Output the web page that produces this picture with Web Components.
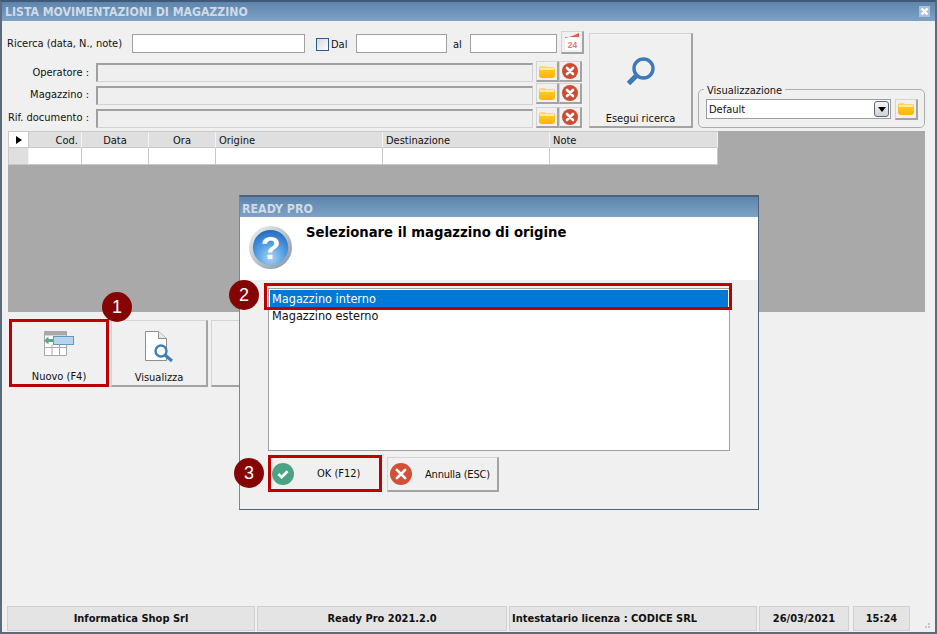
<!DOCTYPE html>
<html lang="it">
<head>
<meta charset="utf-8">
<title>Lista movimentazioni di magazzino</title>
<style>
    html, body { margin: 0; height: 100%; overflow: hidden; }
    body { font: 11px "DejaVu Sans Condensed", "Liberation Sans", sans-serif; color: #111; }
</style>
</head>
<body>
<app-window heading="LISTA MOVIMENTAZIONI DI MAGAZZINO">
    <search-form></search-form>
    <data-grid></data-grid>
    <tool-bar>
        <tool-button label="Nuovo (F4)" icon="nuovo" marked></tool-button>
        <tool-button label="Visualizza" icon="view"></tool-button>
        <tool-button></tool-button>
    </tool-bar>
    <status-bar>
        <status-cell style="width:248px">Informatica Shop Srl</status-cell>
        <status-cell style="width:250px">Ready Pro 2021.2.0</status-cell>
        <status-cell style="width:248px" left>Intestatario licenza : CODICE SRL</status-cell>
        <status-cell style="width:90px">26/03/2021</status-cell>
        <status-cell style="width:57px;margin-left:2px">15:24</status-cell>
    </status-bar>
</app-window>
<modal-dialog heading="READY PRO" message="Selezionare il magazzino di origine"></modal-dialog>
<step-badge n="1" style="left:102px;top:292px"></step-badge>
<step-badge n="2" style="left:229px;top:280px"></step-badge>
<step-badge n="3" style="left:234px;top:458px"></step-badge>

<script>
const ICONS = {
    folder: `<svg width="16" height="13" viewBox="0 0 16 13"><defs><linearGradient id="f" x1="0" y1="0" x2="0" y2="1"><stop offset="0" stop-color="#ffd980"/><stop offset=".35" stop-color="#ffc81e"/><stop offset="1" stop-color="#fdb400"/></linearGradient></defs><path d="M0 3 Q0 1 2 1 H6 L7 2 H14 Q16 2 16 4 V10 Q16 13 13 13 H3 Q0 13 0 10Z" fill="url(#f)"/><path d="M1 3 H15 V5 H1Z" fill="#ffefc0" opacity=".85"/></svg>`,
    cancel: `<svg width="18" height="18" viewBox="0 0 18 18"><circle cx="9" cy="9" r="8" fill="#cf4a33"/><path d="M6 6 L12 12 M12 6 L6 12" stroke="#fff" stroke-width="2.6" stroke-linecap="round"/></svg>`,
    calendar: `<svg width="18" height="18" viewBox="0 0 18 18"><path d="M2 5 H17 V17 H2Z" fill="#fff"/><path d="M2 5 Q8 4 16 0 V4 H2Z" fill="#e35b4e"/><text x="9.5" y="15" font-family="Liberation Sans" font-size="8.5" font-weight="700" fill="#e8756c" text-anchor="middle">24</text></svg>`,
    search: `<svg width="32" height="32" viewBox="0 0 32 32"><circle cx="18.5" cy="12.5" r="9.5" fill="none" stroke="#3d7ab8" stroke-width="3.4"/><path d="M11.5 19.5 L3.5 27.5" stroke="#3d7ab8" stroke-width="5"/></svg>`,
    nuovo: `<svg width="32" height="32" viewBox="0 0 32 32"><path d="M1.500 1.500 H23.500 V25.500 H1.500Z" fill="#fff" stroke="#a8a8a8"/><path d="M1.500 1.500 H23.500 V5.500 H1.500Z" fill="#a8a8a8"/><path d="M1.500 17.500 H23.500 M9 14.500 V25.500 M16.500 14.500 V25.500" stroke="#a8a8a8" fill="none"/><rect x="10.500" y="6.500" width="20" height="8" fill="#b9d3ea" stroke="#5e9cc7"/><path d="M1 10.500 L5.500 6.500 V9 H10 V12 H5.500 V14.500Z" fill="#5aa886"/></svg>`,
    view: `<svg width="32" height="32" viewBox="0 0 32 32"><path d="M2.500 .5 H15.500 L23.500 7.500 V29.500 H2.500Z" fill="#fff" stroke="#8f8f8f"/><path d="M15.500 .5 V7.500 H23.500" fill="#e8e8e8" stroke="#8f8f8f"/><circle cx="18" cy="20" r="5.500" fill="#fff" stroke="#3f80b8" stroke-width="2.400"/><path d="M22 24 L29 30" stroke="#3f80b8" stroke-width="3.200"/></svg>`,
    question: `<svg width="45" height="45" viewBox="0 0 46 46"><defs><radialGradient id="q" cx=".5" cy=".8" r=".85"><stop offset="0" stop-color="#a4d4f5"/><stop offset=".55" stop-color="#4b96de"/><stop offset="1" stop-color="#1c62b8"/></radialGradient><linearGradient id="r" x1="0" y1="0" x2="1" y2="1"><stop offset="0" stop-color="#f4f4f4"/><stop offset="1" stop-color="#7f93a4"/></linearGradient></defs><circle cx="23" cy="23" r="22" fill="url(#r)"/><circle cx="23" cy="23" r="18" fill="url(#q)"/><text x="23" y="35" font-family="Liberation Sans" font-size="33" font-weight="700" fill="#fff" text-anchor="middle">?</text></svg>`,
    ok: `<svg width="22" height="22" viewBox="0 0 24 24"><circle cx="12" cy="12" r="12" fill="#4ba384"/><path d="M7 12 L10.500 15.500 L17 9" fill="none" stroke="#fff" stroke-width="2.800"/></svg>`,
    no: `<svg width="22" height="22" viewBox="0 0 24 24"><circle cx="12" cy="12" r="12" fill="#d34f38"/><path d="M7.500 7.500 L16.500 16.500 M16.500 7.500 L7.500 16.500" stroke="#fff" stroke-width="3" stroke-linecap="round"/></svg>`
};

class AppIcon extends HTMLElement {
    constructor() {
        super();
        this.attachShadow({mode: 'open'});
    }
    connectedCallback() {
        this.shadowRoot.innerHTML = `<style>:host { display: inline-flex; } svg { display: block; }</style>${ICONS[this.getAttribute("name")] || ""}`;
    }
}
customElements.define('app-icon', AppIcon);

const window_template = document.createElement("template");
window_template.innerHTML = `
    <style>
        :host {
            display: flex;
            flex-direction: column;
            box-sizing: border-box;
            width: 937px;
            height: 634px;
            background: #f0f0f0;
            border: 2px solid #5b6b7c;
            border-top-color: #3f5a78;
        }
        #title {
            display: flex;
            align-items: center;
            justify-content: space-between;
            height: 19px;
            padding: 0 3px;
            background: linear-gradient(#5e85ad, #7ea2c6);
            color: #cfdbe8;
            font-weight: 700;
            font-size: 12.15px;
            flex: none;
        }
        #close {
            width: 11px;
            height: 11px;
            margin-right: 2px;
            background: #a9c0d8;
        }
        #close svg { display: block; }
        #body { flex: 1; display: flex; flex-direction: column; min-height: 0; }
    </style>
    <div id="title"><span id="heading"></span><span id="close"><svg width="11" height="11" viewBox="0 0 11 11"><path d="M2.500 2.500 L8.500 8.500 M8.500 2.500 L2.500 8.500" stroke="#fff" stroke-width="2.400"/></svg></span></div>
    <div id="body"><slot></slot></div>
`;

class AppWindow extends HTMLElement {
    constructor() {
        super();
        this.attachShadow({mode: 'open'});
        this.shadowRoot.appendChild(window_template.content.cloneNode(true));
        this.shadowRoot.querySelector("#heading").textContent = this.getAttribute("heading");
    }
}
customElements.define('app-window', AppWindow);

class BevelButton extends HTMLElement {
    constructor() {
        super();
        this.attachShadow({mode: 'open'});
        this.shadowRoot.innerHTML = `
            <style>
                :host {
                    display: inline-flex;
                    align-items: center;
                    justify-content: center;
                    box-sizing: border-box;
                    flex: none;
                    width: 23px;
                    height: 21px;
                    background: #f0f0f0;
                    border: 1px solid #d4d4d4;
                    border-right: 2px solid #a3a3a3;
                    border-bottom: 2px solid #a3a3a3;
                }
            </style>
            <slot></slot>
        `;
    }
}
customElements.define('bevel-button', BevelButton);

const form_template = document.createElement("template");
form_template.innerHTML = `
    <style>
        :host { display: flex; padding: 11px 0 0 5px; height: 102px; box-sizing: border-box; flex: none; }
        #left { width: 575px; display: flex; flex-direction: column; flex: none; }
        #first { display: flex; align-items: center; height: 22px; margin-bottom: 7px; }
        .input {
            box-sizing: border-box;
            height: 19px;
            background: #fff;
            border: 1px solid #a0a0a0;
            flex: none;
        }
        .row { display: flex; align-items: center; height: 21px; margin-bottom: 1px; }
        .row.mid { margin-bottom: 3px; }
        .row label { width: 82px; flex: none; text-align: right; margin: 2px 7px 0 0; white-space: nowrap; }
        .row.last label { margin-top: 0; }
        .field {
            box-sizing: border-box;
            flex: 1;
            height: 19px;
            margin: 1px 3px 0 0;
            background: #efefef;
            border: 1px solid #d2d2d2;
            border-top: 2px solid #a0a0a0;
            border-left: 2px solid #a0a0a0;
        }
        .row.mid .field { margin-top: 4px; }
        #check {
            box-sizing: border-box;
            width: 13px;
            height: 13px;
            margin: 2px 2px 0 11px;
            border: 1px solid #2c5a8c;
            background: linear-gradient(135deg, #d8d8d8, #fff);
            flex: none;
        }
        #search {
            box-sizing: border-box;
            flex: none;
            display: flex;
            flex-direction: column;
            align-items: center;
            width: 104px;
            height: 95px;
            margin: 1px 0 0 7px;
            padding-top: 22px;
            background: #f0f0f0;
            border: 1px solid #d4d4d4;
            border-right: 2px solid #a3a3a3;
            border-bottom: 2px solid #a3a3a3;
        }
        #search span { margin-top: 24px; }
        fieldset {
            box-sizing: border-box;
            flex: none;
            align-self: flex-end;
            width: 227px;
            height: 43px;
            margin: 0 0 -5px 5px;
            padding: 0 6px 0 7px;
            border: 1px solid #adadad;
            border-radius: 5px;
            display: flex;
            align-items: center;
            gap: 4px;
        }
        legend { padding: 0 3px; margin-left: -2px; line-height: 9px; position: relative; top: 1px; }
        #select {
            flex: 1;
            box-sizing: border-box;
            height: 20px;
            display: flex;
            align-items: center;
            justify-content: space-between;
            padding: 0 1px 0 2px;
            background: #fff;
            border: 1px solid #9c9c9c;
            margin-top: -3px;
        }
        #select span { margin-top: 1px; }
        #arrow {
            box-sizing: border-box;
            width: 15px;
            height: 16px;
            border: 1px solid #5f6770;
            border-radius: 3px;
            background: linear-gradient(#f6f6f6, #cfd3d8);
            display: flex;
            align-items: center;
            justify-content: center;
        }
        #arrow i { border: 4px solid transparent; border-top: 5px solid #000; border-bottom: 0; }
        #viewfolder { margin-top: -3px; }
    </style>
    <div id="left">
        <div id="first">
            <span style="width:125px;flex:none;white-space:nowrap">Ricerca (data, N., note)</span>
            <div class="input" style="width:173px"></div>
            <div id="check"></div>
            <span style="width:25px;flex:none;margin-top:2px">Dal</span>
            <div class="input" style="width:91px"></div>
            <span style="width:23px;flex:none;text-indent:6px;margin-top:2px">al</span>
            <div class="input" style="width:87px"></div>
            <bevel-button style="margin-left:4px;height:23px;margin-top:-1px"><app-icon name="calendar"></app-icon></bevel-button>
        </div>
        <div class="row"><label>Operatore :</label><div class="field"></div><bevel-button><app-icon name="folder"></app-icon></bevel-button><bevel-button><app-icon name="cancel"></app-icon></bevel-button></div>
        <div class="row mid"><label>Magazzino :</label><div class="field"></div><bevel-button><app-icon name="folder"></app-icon></bevel-button><bevel-button><app-icon name="cancel"></app-icon></bevel-button></div>
        <div class="row last"><label>Rif. documento :</label><div class="field"></div><bevel-button><app-icon name="folder"></app-icon></bevel-button><bevel-button><app-icon name="cancel"></app-icon></bevel-button></div>
    </div>
    <div id="search"><app-icon name="search"></app-icon><span>Esegui ricerca</span></div>
    <fieldset>
        <legend>Visualizzazione</legend>
        <div id="select"><span>Default</span><div id="arrow"><i></i></div></div>
        <bevel-button id="viewfolder"><app-icon name="folder"></app-icon></bevel-button>
    </fieldset>
`;

class SearchForm extends HTMLElement {
    constructor() {
        super();
        this.attachShadow({mode: 'open'});
        this.shadowRoot.appendChild(form_template.content.cloneNode(true));
    }
}
customElements.define('search-form', SearchForm);

class DataGrid extends HTMLElement {
    constructor() {
        super();
        this.attachShadow({mode: 'open'});
        const cols = [["Cod.", "right"], ["Data", "center"], ["Ora", "center"], ["Origine", "left"], ["Destinazione", "left"], ["Note", "left"]];
        const head = cols.map(c => `<div class="h" style="text-align:${c[1]}">${c[0]}</div>`).join("");
        const cells = cols.map(() => `<div class="c"></div>`).join("");
        this.shadowRoot.innerHTML = `
            <style>
                :host {
                    display: block;
                    flex: none;
                    box-sizing: border-box;
                    width: 917px;
                    height: 181px;
                    margin: 8px 0 0 6px;
                    background: #a9a9a9;
                }
                #grid {
                    display: grid;
                    grid-template-columns: 20px 53px 67px 67px 167px 167px 168px;
                    grid-template-rows: 16px 17px;
                    width: 709px;
                    gap: 0;
                    background: #fff;
                    border-top: 1px solid #c8c8c8;
                    border-left: 1px solid #c8c8c8;
                }
                .h, .i {
                    box-sizing: border-box;
                    background: #dfdfdf;
                    border-right: 1px solid #f4f4f4;
                    border-bottom: 1px solid #c8c8c8;
                    padding: 1px 3px 0;
                    line-height: 15px;
                    white-space: nowrap;
                }
                .i { display: flex; align-items: center; justify-content: center; padding: 0; }
                .i.top { background: #fff; border-right: 1px solid #c8c8c8; }
                .top b { border: 4px solid transparent; border-left: 6px solid #000; border-right: 0; }
                .c { box-sizing: border-box; border-right: 1px solid #c8c8c8; border-bottom: 1px solid #c8c8c8; }
            </style>
            <div id="grid"><div class="i top"><b></b></div>${head}<div class="i"></div>${cells}</div>
        `;
    }
}
customElements.define('data-grid', DataGrid);

class ToolBar extends HTMLElement {
    constructor() {
        super();
        this.attachShadow({mode: 'open'});
        this.shadowRoot.innerHTML = `
            <style>:host { display: flex; gap: 3px; flex: none; padding: 7px 0 0 7px; align-items: flex-end; }</style>
            <slot></slot>
        `;
    }
}
customElements.define('tool-bar', ToolBar);

class ToolButton extends HTMLElement {
    constructor() {
        super();
        this.attachShadow({mode: 'open'});
        const icon = this.getAttribute("icon");
        this.shadowRoot.innerHTML = `
            <style>
                :host {
                    box-sizing: border-box;
                    display: flex;
                    flex-direction: column;
                    align-items: center;
                    width: 97px;
                    height: 67px;
                    padding-top: 10px;
                    background: #f0f0f0;
                    border: 1px solid #d4d4d4;
                    border-right: 2px solid #a3a3a3;
                    border-bottom: 2px solid #a3a3a3;
                }
                :host([marked]) { width: 100px; height: 68px; margin-right: -1px; border: 3px solid #c00000; padding-top: 8px; }
                span { margin-top: 8px; }
            </style>
            ${icon ? `<app-icon name="${icon}"></app-icon><span>${this.getAttribute("label")}</span>` : ""}
        `;
    }
}
customElements.define('tool-button', ToolButton);

class StatusBar extends HTMLElement {
    constructor() {
        super();
        this.attachShadow({mode: 'open'});
        this.shadowRoot.innerHTML = `
            <style>
                :host { display: flex; gap: 2px; align-items: stretch; flex: none; height: 25px; margin-top: auto; padding: 0 0 1px 5px; }
                svg { margin: auto 0 3px 4px; }
            </style>
            <slot></slot>
            <svg width="14" height="8" viewBox="0 0 14 8"><path d="M9 6h2v2H9z M12 6h2v2h-2z M12 3h2v2h-2z" fill="#c4c4c4"/></svg>
        `;
    }
}
customElements.define('status-bar', StatusBar);

class StatusCell extends HTMLElement {
    constructor() {
        super();
        this.attachShadow({mode: 'open'});
        this.shadowRoot.innerHTML = `
            <style>
                :host {
                    box-sizing: border-box;
                    display: flex;
                    align-items: center;
                    justify-content: center;
                    padding: 0 3px;
                    background: #e4e4e4;
                    border: 1px solid #d0d0d0;
                    font-weight: 700;
                    white-space: nowrap;
                }
                :host([left]) { justify-content: flex-start; padding-left: 2px; }
            </style>
            <slot></slot>
        `;
    }
}
customElements.define('status-cell', StatusCell);

const dialog_template = document.createElement("template");
dialog_template.innerHTML = `
    <style>
        :host {
            position: absolute;
            left: 239px;
            top: 195px;
            box-sizing: border-box;
            width: 520px;
            height: 315px;
            display: flex;
            flex-direction: column;
            background: #f0f0f0;
            border: 1px solid #4d6279;
            border-top-width: 2px;
            border-left-color: #7a8794;
        }
        #title {
            height: 20px;
            flex: none;
            padding-left: 2px;
            background: linear-gradient(#5e85ad, #7ea2c6);
            color: #cfdbe8;
            font-weight: 700;
            font-size: 12.3px;
            line-height: 24px;
        }
        #top {
            height: 63px;
            flex: none;
            background: #fff;
            display: flex;
            padding: 8px 0 0 8px;
            box-sizing: border-box;
        }
        #msg { font-size: 14.7px; font-weight: 700; color: #000; margin: -2px 0 0 13px; }
        #list {
            box-sizing: border-box;
            height: 163px;
            margin: 8px 28px 0 28px;
            padding: 1px;
            background: #fff;
            border: 1px solid #a0a0a0;
        }
        .item { height: 17px; line-height: 17px; padding-left: 2px; font-size: 12.6px; }
        .item.sel { background: #0078d7; color: #fff; }
        #actions { display: flex; margin: 4px 0 0 28px; gap: 5px; }
        .act {
            box-sizing: border-box;
            display: flex;
            align-items: center;
            position: relative;
            background: #f0f0f0;
            white-space: nowrap;
        }
        #ok { width: 114px; height: 37px; border: 3px solid #c00000; padding-left: 1px; }
        #ok span { margin-left: 23px; }
        #no { width: 112px; height: 35px; margin-top: 2px; padding-left: 2px; border: 1px solid #d4d4d4; border-right: 2px solid #a3a3a3; border-bottom: 2px solid #a3a3a3; }
        #no span { margin-left: 13px; letter-spacing: -.2px; }
        #frame {
            position: absolute;
            left: 24px;
            top: 86px;
            width: 468px;
            height: 27px;
            box-sizing: border-box;
            border: 3px solid #c00000;
        }
    </style>
    <div id="title"></div>
    <div id="top"><app-icon name="question"></app-icon><div id="msg"></div></div>
    <div id="list"><div class="item sel">Magazzino interno</div><div class="item">Magazzino esterno</div></div>
    <div id="actions">
        <div class="act" id="ok"><app-icon name="ok"></app-icon><span>OK (F12)</span></div>
        <div class="act" id="no"><app-icon name="no"></app-icon><span>Annulla (ESC)</span></div>
    </div>
    <div id="frame"></div>
`;

class ModalDialog extends HTMLElement {
    constructor() {
        super();
        this.attachShadow({mode: 'open'});
        this.shadowRoot.appendChild(dialog_template.content.cloneNode(true));
        this.shadowRoot.querySelector("#title").textContent = this.getAttribute("heading");
        this.shadowRoot.querySelector("#msg").textContent = this.getAttribute("message");
    }
}
customElements.define('modal-dialog', ModalDialog);

class StepBadge extends HTMLElement {
    constructor() {
        super();
        this.attachShadow({mode: 'open'});
        this.shadowRoot.innerHTML = `
            <style>
                :host {
                    position: absolute;
                    width: 30px;
                    height: 30px;
                    border-radius: 50%;
                    background: #850505;
                    color: #fff;
                    font: 18px "Liberation Sans", sans-serif;
                    display: flex;
                    align-items: center;
                    justify-content: center;
                }
            </style>
            ${this.getAttribute("n")}
        `;
    }
}
customElements.define('step-badge', StepBadge);
</script>
</body>
</html>
